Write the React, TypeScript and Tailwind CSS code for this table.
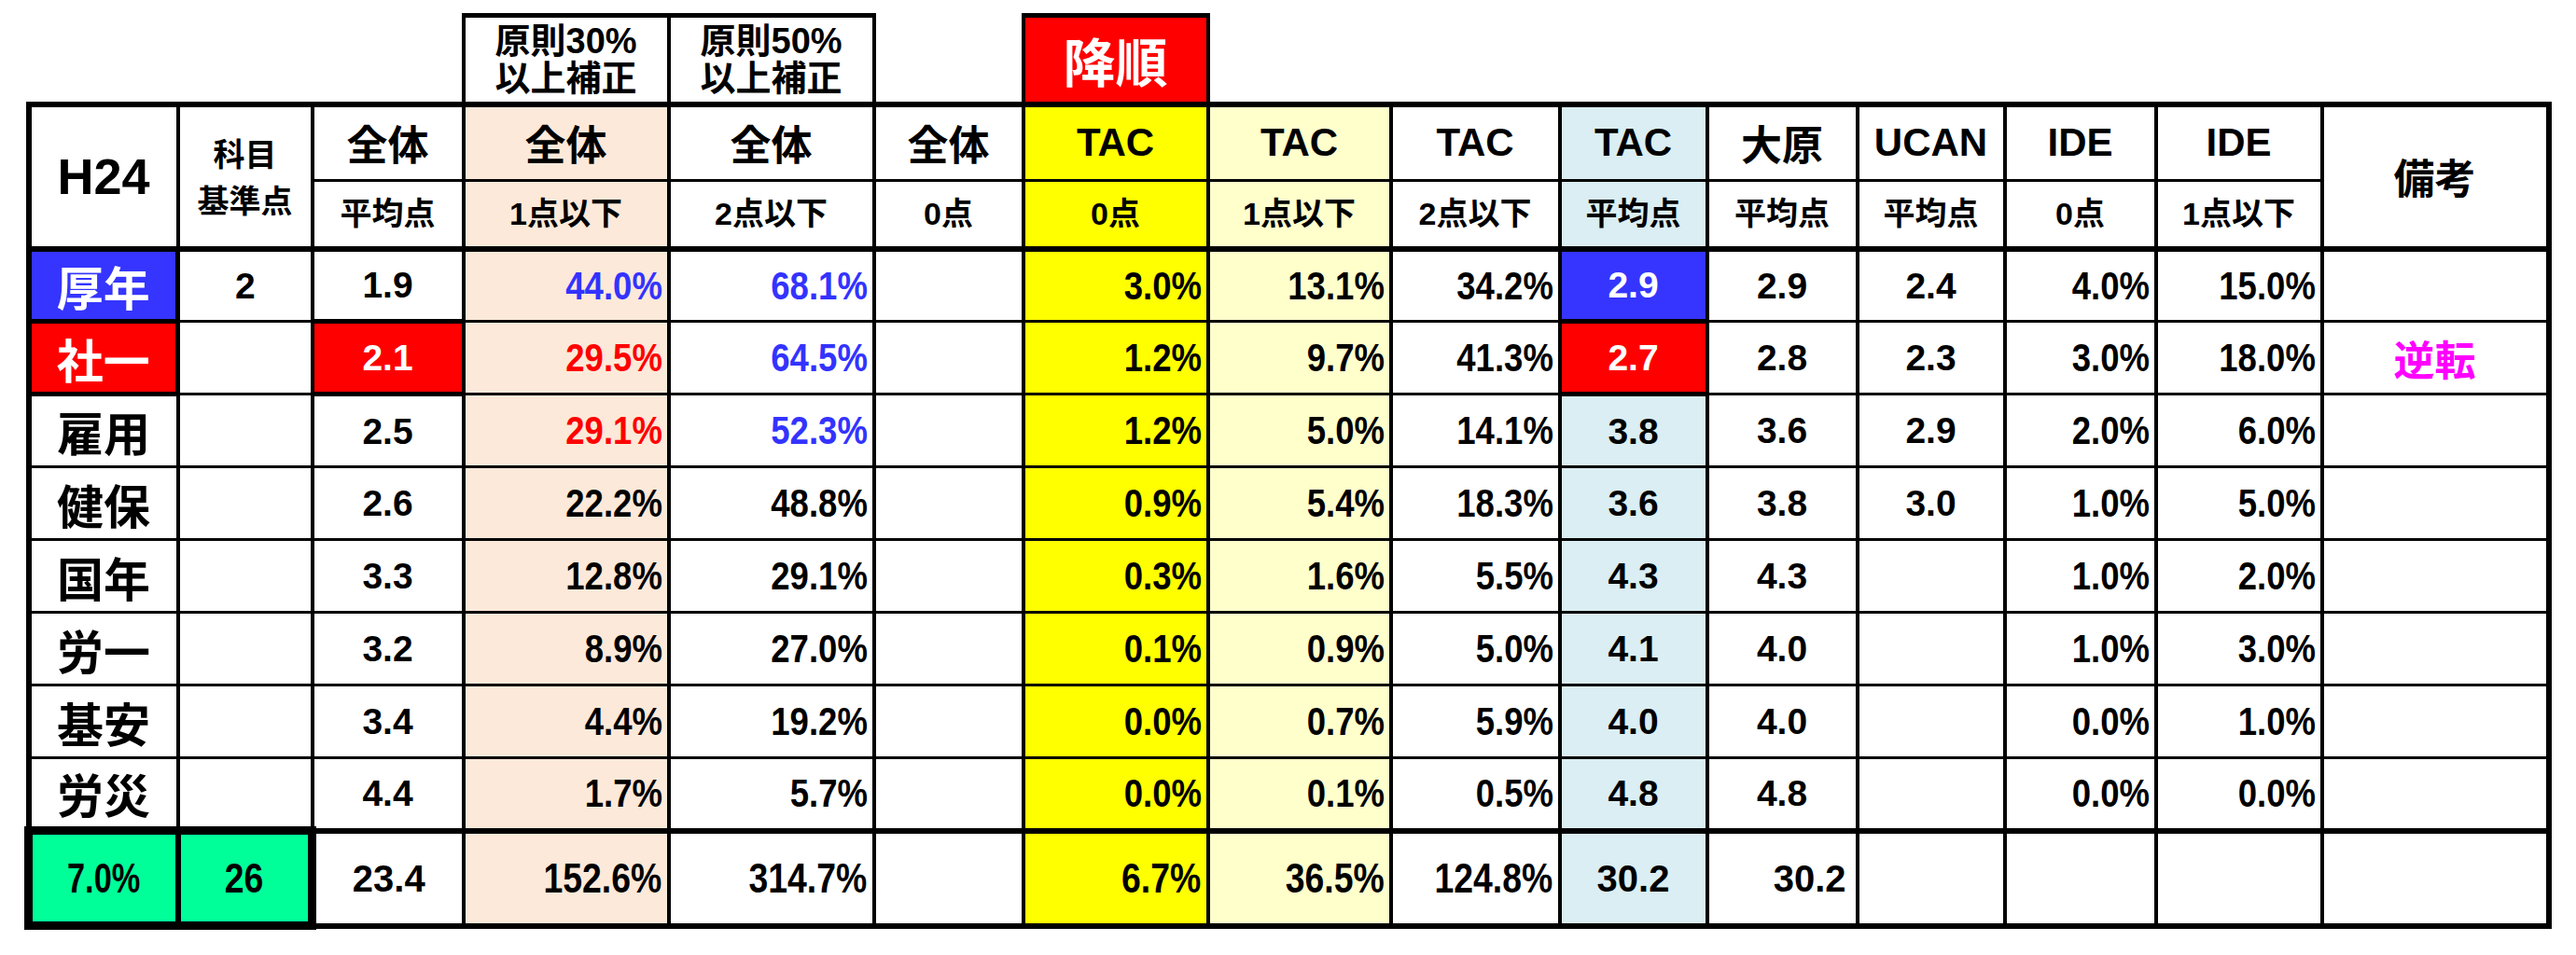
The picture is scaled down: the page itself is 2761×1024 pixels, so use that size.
import React from "react";

const widths = [160, 144, 162, 220, 220, 160, 198, 196, 181, 158, 161, 158, 162, 178, 243];

const BG = [
  "",
  "",
  "",
  "bg-[#fde9d9]",
  "",
  "",
  "bg-[#ffff00]",
  "bg-[#ffffcc]",
  "",
  "bg-[#daeef3]",
  "",
  "",
  "",
  "",
  "",
];

// column kinds: l=label, a=avg center, p=percent right, n=note
const KIND = ["l", "a", "a", "p", "p", "p", "p", "p", "p", "a", "a", "a", "p", "p", "n"];

type V = { t: string; c?: string; bg?: string };

const rows: { label: string; labelBg?: string; cells: (string | V)[] }[] = [
  {
    label: "厚年",
    labelBg: "blue",
    cells: ["2", "1.9", { t: "44.0%", c: "blue" }, { t: "68.1%", c: "blue" }, "", "3.0%", "13.1%", "34.2%", { t: "2.9", bg: "blue" }, "2.9", "2.4", "4.0%", "15.0%", ""],
  },
  {
    label: "社一",
    labelBg: "red",
    cells: ["", { t: "2.1", bg: "red" }, { t: "29.5%", c: "red" }, { t: "64.5%", c: "blue" }, "", "1.2%", "9.7%", "41.3%", { t: "2.7", bg: "red" }, "2.8", "2.3", "3.0%", "18.0%", "逆転"],
  },
  {
    label: "雇用",
    cells: ["", "2.5", { t: "29.1%", c: "red" }, { t: "52.3%", c: "blue" }, "", "1.2%", "5.0%", "14.1%", "3.8", "3.6", "2.9", "2.0%", "6.0%", ""],
  },
  { label: "健保", cells: ["", "2.6", "22.2%", "48.8%", "", "0.9%", "5.4%", "18.3%", "3.6", "3.8", "3.0", "1.0%", "5.0%", ""] },
  { label: "国年", cells: ["", "3.3", "12.8%", "29.1%", "", "0.3%", "1.6%", "5.5%", "4.3", "4.3", "", "1.0%", "2.0%", ""] },
  { label: "労一", cells: ["", "3.2", "8.9%", "27.0%", "", "0.1%", "0.9%", "5.0%", "4.1", "4.0", "", "1.0%", "3.0%", ""] },
  { label: "基安", cells: ["", "3.4", "4.4%", "19.2%", "", "0.0%", "0.7%", "5.9%", "4.0", "4.0", "", "0.0%", "1.0%", ""] },
  { label: "労災", cells: ["", "4.4", "1.7%", "5.7%", "", "0.0%", "0.1%", "0.5%", "4.8", "4.8", "", "0.0%", "0.0%", ""] },
];

const SANS = "font-['Liberation_Sans','Noto_Sans_CJK_JP',sans-serif]";

function Narrow({ t, center }: { t: string; center?: boolean }) {
  if (!t) return null;
  return (
    <span className={`inline-block scale-x-[0.85] ${center ? "origin-center" : "origin-right"}`}>{t}</span>
  );
}

function edge(ci: number) {
  if (ci === 0) return "border-l-[6px] border-r-4";
  if (ci === 14) return "border-l-4 border-r-[6px]";
  return "border-x-4";
}

function DataRow({ r, ri }: { r: (typeof rows)[number]; ri: number }) {
  const labelCls =
    r.labelBg === "blue"
      ? "bg-[#3535ff] text-white border-y-[5px] border-r-[5px]"
      : r.labelBg === "red"
      ? "bg-[#ff0000] text-white border-y-[5px] border-r-[5px]"
      : "text-black border-y-[3px]";
  return (
    <tr className="h-[78px]">
      <td className={`border-black border-l-[6px] border-r-4 ${labelCls} text-center align-middle p-0 text-[50px] font-bold leading-none font-['Noto_Sans_CJK_JP',sans-serif]`}>
        {r.label}
      </td>
      {r.cells.map((c, i) => {
        const ci = i + 1;
        const v: V = typeof c === "string" ? { t: c } : c;
        const kind = KIND[ci];
        let bg = BG[ci];
        let txt = "text-black";
        let bord = "border-y-[3px]";
        if (v.bg === "blue") {
          bg = "bg-[#3535ff]";
          txt = "text-white";
          bord = "border-[5px]";
        } else if (v.bg === "red") {
          bg = "bg-[#ff0000]";
          txt = "text-white";
          bord = "border-[5px]";
        }
        if (v.c === "blue") txt = "text-[#3333ff]";
        if (v.c === "red") txt = "text-[#ff0000]";
        let f = "";
        if (kind === "a") f = `${SANS} text-[39px] text-center`;
        else if (kind === "p") f = `${SANS} text-[43px] text-right pr-[5px]`;
        else f = `font-['Noto_Sans_CJK_JP',sans-serif] text-[44px] text-center text-[#ff00ff]`;
        if (kind === "n") txt = "";
        return (
          <td key={ci} className={`border-black ${edge(ci)} ${bord} ${bg} ${txt} ${f} align-middle p-0 font-bold leading-none`} data-r={ri}>
            {kind === "p" ? <Narrow t={v.t} /> : v.t}
          </td>
        );
      })}
    </tr>
  );
}

export default function App() {
  const hdr1 = "border-black border-x-4 border-t-[6px] border-b-[3px] text-center align-middle p-0 font-bold leading-none";
  const hdr2 = "border-black border-x-4 border-t-[3px] border-b-[6px] text-center align-middle p-0 font-bold leading-none";
  const cjk44 = "font-['Noto_Sans_CJK_JP',sans-serif] text-[44px]";
  const lat42 = "font-['Liberation_Sans',sans-serif] text-[42px]";
  const sub = `${SANS} text-[34px]`;
  const totalPct = `${SANS} text-[44px] text-right pr-[5px]`;
  const totalAvg = `${SANS} text-[40px] text-center`;
  const tb = "border-black border-x-4 border-t-[6px] border-b-[6px] align-middle p-0 font-bold leading-none";
  return (
    <div className="bg-white w-[2761px] h-[1024px] pl-[26px] pt-[14px]">
      <table className="border-collapse table-fixed w-[2704px] text-black">
        <colgroup>
          {widths.map((w, i) => (
            <col key={i} style={{ width: w }} />
          ))}
        </colgroup>
        <tbody>
          <tr className="h-[95px]">
            <td colSpan={3} className="p-0 border-0"></td>
            <td className={`border-black border-x-4 border-t-[5px] text-center align-middle p-0 font-bold ${SANS} text-[38px] leading-[40px]`}>
              原則30%
              <br />
              以上補正
            </td>
            <td className={`border-black border-x-4 border-t-[5px] text-center align-middle p-0 font-bold ${SANS} text-[38px] leading-[40px]`}>
              原則50%
              <br />
              以上補正
            </td>
            <td className="p-0 border-0"></td>
            <td className="border-black border-x-4 border-t-[5px] bg-[#ff0000] text-white text-center align-middle p-0 font-bold font-['Noto_Sans_CJK_JP',sans-serif] text-[56px] leading-none">
              降順
            </td>
            <td colSpan={8} className="p-0 border-0"></td>
          </tr>
          <tr className="h-[82px]">
            <td rowSpan={2} className={`border-black border-l-[6px] border-r-4 border-t-[6px] border-b-[6px] text-center align-middle p-0 font-bold leading-none font-['Liberation_Sans',sans-serif] text-[54px]`}>
              H24
            </td>
            <td rowSpan={2} className={`border-black border-x-4 border-t-[6px] border-b-[6px] text-center align-middle p-0 font-bold font-['Noto_Sans_CJK_JP',sans-serif] text-[34px] leading-[50px]`}>
              科目
              <br />
              基準点
            </td>
            <td className={`${hdr1} ${cjk44}`}>全体</td>
            <td className={`${hdr1} ${cjk44} bg-[#fde9d9]`}>全体</td>
            <td className={`${hdr1} ${cjk44}`}>全体</td>
            <td className={`${hdr1} ${cjk44}`}>全体</td>
            <td className={`${hdr1} ${lat42} bg-[#ffff00]`}>TAC</td>
            <td className={`${hdr1} ${lat42} bg-[#ffffcc]`}>TAC</td>
            <td className={`${hdr1} ${lat42}`}>TAC</td>
            <td className={`${hdr1} ${lat42} bg-[#daeef3]`}>TAC</td>
            <td className={`${hdr1} ${cjk44}`}>大原</td>
            <td className={`${hdr1} ${lat42}`}>UCAN</td>
            <td className={`${hdr1} ${lat42}`}>IDE</td>
            <td className={`${hdr1} ${lat42}`}>IDE</td>
            <td rowSpan={2} className={`border-black border-l-4 border-r-[6px] border-t-[6px] border-b-[6px] text-center align-middle p-0 font-bold leading-none ${cjk44}`}>
              備考
            </td>
          </tr>
          <tr className="h-[73px]">
            <td className={`${hdr2} ${sub}`}>平均点</td>
            <td className={`${hdr2} ${sub} bg-[#fde9d9]`}>1点以下</td>
            <td className={`${hdr2} ${sub}`}>2点以下</td>
            <td className={`${hdr2} ${sub}`}>0点</td>
            <td className={`${hdr2} ${sub} bg-[#ffff00]`}>0点</td>
            <td className={`${hdr2} ${sub} bg-[#ffffcc]`}>1点以下</td>
            <td className={`${hdr2} ${sub}`}>2点以下</td>
            <td className={`${hdr2} ${sub} bg-[#daeef3]`}>平均点</td>
            <td className={`${hdr2} ${sub}`}>平均点</td>
            <td className={`${hdr2} ${sub}`}>平均点</td>
            <td className={`${hdr2} ${sub}`}>0点</td>
            <td className={`${hdr2} ${sub}`}>1点以下</td>
          </tr>
          {rows.map((r, ri) => (
            <DataRow key={ri} r={r} ri={ri} />
          ))}
          <tr className="h-[102px]">
            <td className={`border-black border-[9px] border-r-[6px] bg-[#00ff99] text-center align-middle p-0 font-bold leading-none ${SANS} text-[44px]`}>
              <span className="inline-block scale-x-[0.78] origin-center">7.0%</span>
            </td>
            <td className={`border-black border-[9px] border-l-[6px] bg-[#00ff99] text-center align-middle p-0 font-bold leading-none ${SANS} text-[44px]`}>
              <Narrow t="26" center />
            </td>
            <td className={`${tb} ${totalAvg}`}>23.4</td>
            <td className={`${tb} ${totalPct} bg-[#fde9d9]`}>
              <Narrow t="152.6%" />
            </td>
            <td className={`${tb} ${totalPct}`}>
              <Narrow t="314.7%" />
            </td>
            <td className={`${tb}`}></td>
            <td className={`${tb} ${totalPct} bg-[#ffff00]`}>
              <Narrow t="6.7%" />
            </td>
            <td className={`${tb} ${totalPct} bg-[#ffffcc]`}>
              <Narrow t="36.5%" />
            </td>
            <td className={`${tb} ${totalPct}`}>
              <Narrow t="124.8%" />
            </td>
            <td className={`${tb} ${totalAvg} bg-[#daeef3]`}>30.2</td>
            <td className={`${tb} ${SANS} text-[40px] text-right pr-[10px]`}>30.2</td>
            <td className={`${tb}`}></td>
            <td className={`${tb}`}></td>
            <td className={`${tb}`}></td>
            <td className={`border-black border-l-4 border-r-[6px] border-y-[6px] p-0`}></td>
          </tr>
        </tbody>
      </table>
    </div>
  );
}
